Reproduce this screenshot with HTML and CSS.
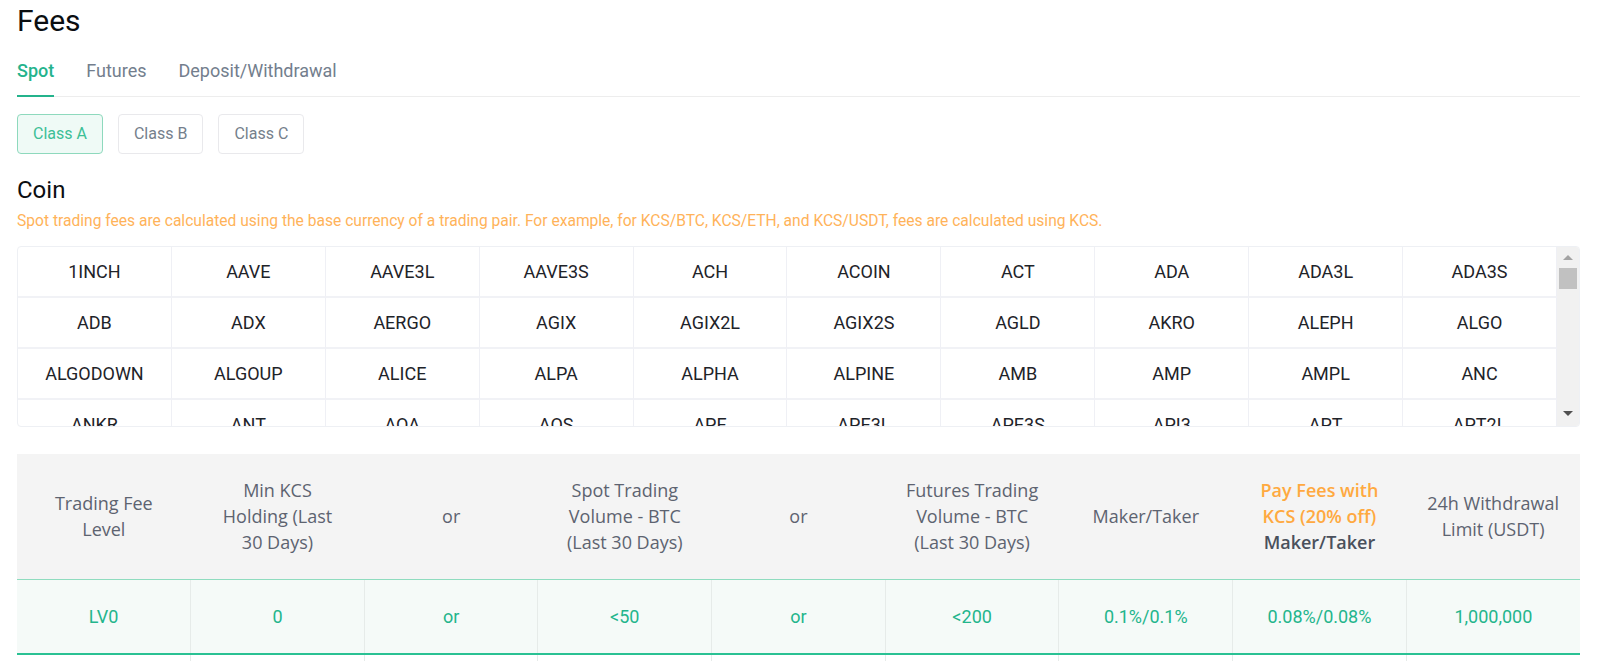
FILE: index.html
```html
<!DOCTYPE html>
<html lang="en">
<head>
<meta charset="utf-8">
<title>Fees</title>
<link rel="stylesheet" href="styles.css">
</head>
<body>
<div class="page">
  <h1 class="title">Fees</h1>
  <div class="tabs">
    <div class="tab active">Spot</div>
    <div class="tab">Futures</div>
    <div class="tab">Deposit/Withdrawal</div>
  </div>
  <div class="classes">
    <div class="cls active">Class A</div>
    <div class="cls">Class B</div>
    <div class="cls">Class C</div>
  </div>
  <h2 class="coin-title">Coin</h2>
  <p class="note">Spot trading fees are calculated using the base currency of a trading pair. For example, for KCS/BTC, KCS/ETH, and KCS/USDT, fees are calculated using KCS.</p>
  <div class="coins">
    <div class="coin-grid">
      <div class="c">1INCH</div><div class="c">AAVE</div><div class="c">AAVE3L</div><div class="c">AAVE3S</div><div class="c">ACH</div><div class="c">ACOIN</div><div class="c">ACT</div><div class="c">ADA</div><div class="c">ADA3L</div><div class="c">ADA3S</div>
      <div class="c">ADB</div><div class="c">ADX</div><div class="c">AERGO</div><div class="c">AGIX</div><div class="c">AGIX2L</div><div class="c">AGIX2S</div><div class="c">AGLD</div><div class="c">AKRO</div><div class="c">ALEPH</div><div class="c">ALGO</div>
      <div class="c">ALGODOWN</div><div class="c">ALGOUP</div><div class="c">ALICE</div><div class="c">ALPA</div><div class="c">ALPHA</div><div class="c">ALPINE</div><div class="c">AMB</div><div class="c">AMP</div><div class="c">AMPL</div><div class="c">ANC</div>
      <div class="c">ANKR</div><div class="c">ANT</div><div class="c">AOA</div><div class="c">AOS</div><div class="c">APE</div><div class="c">APE3L</div><div class="c">APE3S</div><div class="c">API3</div><div class="c">APT</div><div class="c">APT2L</div>
      <div class="c">APT2S</div><div class="c">AR</div><div class="c">ARB</div><div class="c">ARPA</div><div class="c">ASD</div><div class="c">ASTR</div><div class="c">ATOM</div><div class="c">AUDIO</div><div class="c">AVAX</div><div class="c">AXS</div>
    </div>
    <div class="scrollbar">
      <div class="sb-up"></div>
      <div class="sb-thumb"></div>
      <div class="sb-track"></div>
      <div class="sb-down"></div>
    </div>
  </div>
  <table class="fees">
    <thead>
      <tr>
        <th>Trading Fee<br>Level</th>
        <th>Min KCS<br>Holding (Last<br>30 Days)</th>
        <th>or</th>
        <th>Spot Trading<br>Volume - BTC<br>(Last 30 Days)</th>
        <th>or</th>
        <th>Futures Trading<br>Volume - BTC<br>(Last 30 Days)</th>
        <th>Maker/Taker</th>
        <th class="strong"><span class="orange">Pay Fees with<br>KCS (20% off)</span><br>Maker/Taker</th>
        <th>24h Withdrawal<br>Limit (USDT)</th>
      </tr>
    </thead>
    <tbody>
      <tr class="current">
        <td>LV0</td><td>0</td><td>or</td><td>&lt;50</td><td>or</td><td>&lt;200</td><td>0.1%/0.1%</td><td>0.08%/0.08%</td><td>1,000,000</td>
      </tr>
      <tr>
        <td>LV1</td><td>1,000</td><td>or</td><td>≥50</td><td>or</td><td>≥200</td><td>0.09%/0.1%</td><td>0.072%/0.08%</td><td>2,000,000</td>
      </tr>
    </tbody>
  </table>
</div>
</body>
</html>
```

FILE: styles.css
```css
* { box-sizing: border-box; }
html, body { margin: 0; padding: 0; background: #fff; }
body { font-family: Roboto, "Liberation Sans", sans-serif; color: #1d2129; }

.page {
  padding: 4px 20px 0 17px;
}

.title {
  margin: 0;
  font-size: 30px;
  line-height: 34px;
  font-weight: 400;
  color: #0b0e11;
}

.tabs {
  margin-top: 21px;
  display: flex;
  gap: 32px;
  border-bottom: 1px solid #ededed;
}
.tab {
  font-size: 18px;
  line-height: 24px;
  padding-bottom: 12px;
  border-bottom: 2px solid transparent;
  margin-bottom: -1px;
  color: #737e8d;
}
.tab.active {
  color: #24b38c;
  border-bottom-color: #24b38c;
  font-weight: 500;
}

.classes {
  margin-top: 17px;
  display: flex;
  gap: 15px;
}
.cls {
  height: 40px;
  line-height: 38px;
  padding: 0 15px;
  border: 1px solid #e9e9ec;
  border-radius: 4px;
  font-size: 16px;
  color: #757f8c;
  background: #fff;
}
.cls.active {
  background: #effaf6;
  border-color: #8ed9bd;
  color: #3cbf97;
}

.coin-title {
  margin: 21px 0 0;
  font-size: 24px;
  line-height: 30px;
  font-weight: 400;
  color: #0b0e11;
}

.note {
  margin: 5px 0 0;
  font-size: 15.6px;
  line-height: 22px;
  color: #ffb35a;
}

.coins {
  margin-top: 14px;
  height: 181px;
  display: flex;
  border: 1px solid #eef0f4;
  border-radius: 4px;
  overflow: hidden;
}
.coin-grid {
  flex: 1;
  display: grid;
  grid-template-columns: repeat(10, 1fr);
  grid-auto-rows: 51px;
  overflow: hidden;
}
.c {
  display: flex;
  align-items: center;
  justify-content: center;
  font-size: 18px;
  color: #1e2329;
  border-right: 1px solid #eff0f5;
  border-bottom: 2px solid #f1f2f6;
}

.scrollbar {
  width: 22px;
  flex: none;
  background: #f1f1f1;
  display: flex;
  flex-direction: column;
  align-items: center;
  padding: 0 2px;
}
.sb-up {
  width: 0; height: 0;
  margin-top: 8px;
  border-left: 5px solid transparent;
  border-right: 5px solid transparent;
  border-bottom: 5px solid #a3a3a3;
}
.sb-thumb {
  margin-top: 8px;
  width: 18px;
  height: 21px;
  background: #c1c1c1;
}
.sb-track { flex: 1; }
.sb-down {
  width: 0; height: 0;
  margin-bottom: 10px;
  border-left: 5px solid transparent;
  border-right: 5px solid transparent;
  border-top: 5px solid #505050;
}

.fees {
  margin-top: 27px;
  width: 100%;
  border-collapse: collapse;
  table-layout: fixed;
}
.fees th {
  height: 125px;
  background: #f4f4f4;
  font-family: "Open Sans", "Liberation Sans", sans-serif;
  font-weight: 400;
  font-size: 18px;
  line-height: 26px;
  color: #5d6370;
  text-align: center;
  vertical-align: middle;
  padding: 0 4px;
  border-bottom: 1px solid #8fdcbf;
}
.fees th.strong { font-weight: 600; color: #4a505c; }
.fees th .orange { color: #ffa940; }

.fees td {
  height: 75px;
  text-align: center;
  vertical-align: middle;
  font-size: 18px;
  color: #23b58c;
  border-left: 1px solid #e6ebe9;
  border-bottom: 2px solid #2ac193;
}
.fees td:first-child { border-left: none; }
.fees tr.current td { background: #f5faf8; }
```
